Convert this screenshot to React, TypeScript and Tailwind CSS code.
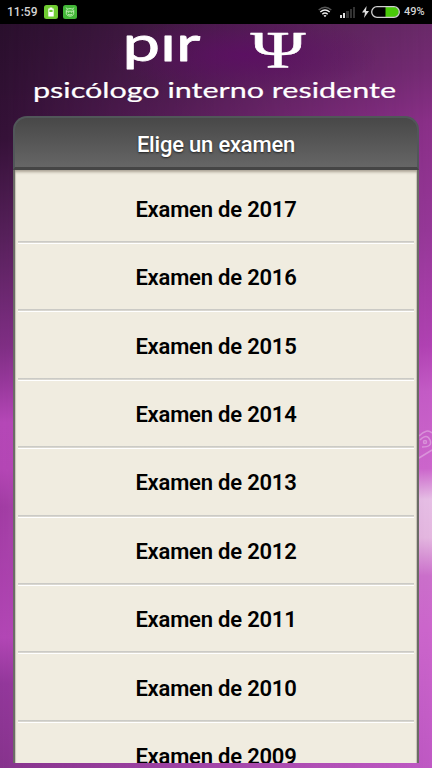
import { clsx } from 'clsx';

const exams = [2017, 2016, 2015, 2014, 2013, 2012, 2011, 2010, 2009];

const signalBars = [3, 5, 7, 9, 11];

const StatusBar = () => (
  <header className="relative flex h-6 items-center bg-black pl-[7px] text-[#d4d4d4]">
    <span className="w-[37px] text-[12px] font-medium leading-6">11:59</span>
    <svg className="h-[14px] w-[14px]" viewBox="0 0 14 14">
      <rect width="14" height="14" rx="2.5" fill="#70cc32" />
      <path d="M4.3 3.6h1.4V2.4h2.6v1.2h1.4v7.9H4.3z" fill="#fff" />
      <path d="M5.4 4.8h3.2v2.2H5.4z" fill="#70cc32" />
    </svg>
    <svg className="ml-[5px] h-[14px] w-[14px]" viewBox="0 0 14 14">
      <rect width="14" height="14" rx="2.5" fill="#43b738" />
      <g fill="none" stroke="#c9f2bd" strokeWidth="0.9">
        <path d="M3.3 5.5C4 3 10 3 10.7 5.5v3C10.2 12 3.8 12 3.3 8.5zM4.3 4.2 3.2 2.6M9.7 4.2l1.1-1.6M3.3 6.2h7.4M4.8 9.2q2.2 1.5 4.4 0" />
        <path d="M4.8 7.2h1.4M7.8 7.2h1.4" />
      </g>
    </svg>
    <div className="ml-auto flex items-center">
      <svg className="h-[12px] w-[14px]" viewBox="0 0 14 12" fill="none">
        <path d="M.7 4Q7-1.5 13.3 4" stroke="#555" strokeWidth="1.5" />
        <path d="M2.3 6q4.7-4 9.4 0M4.3 8.2q2.7-2.3 5.4 0" stroke="#eee" strokeWidth="1.5" />
        <path d="M5.5 9.6Q7 8.3 8.5 9.6L7 11.3z" fill="#eee" />
      </svg>
      <div className="ml-2 flex h-[11px] w-[15px] items-end gap-[1px]">
        {signalBars.map((height, index) => (
          <span
            key={height}
            className={clsx('w-[2.2px]', index < 2 ? 'bg-[#ddd]' : 'bg-[#333]')}
            style={{ height }}
          />
        ))}
      </div>
      <svg className="ml-[7px] h-[12px] w-[7px]" viewBox="0 0 7 12">
        <path d="M4.6 0 0 6.6h3L2 12l5-7H4z" fill="#ddd" />
      </svg>
      <svg className="ml-[2px] h-[12px] w-[29px]" viewBox="0 0 29 12">
        <path d="M14.5 1H23a5 5 0 0 1 0 10h-8.5z" fill="#49c909" />
        <rect x=".7" y=".7" width="27.6" height="10.6" rx="5.3" fill="none" stroke="#d0d0d0" strokeWidth="1.3" />
      </svg>
      <span className="ml-1 w-[28px] text-[11px] font-medium leading-6">49%</span>
    </div>
  </header>
);

const Background = () => (
  <div className="absolute inset-0 bg-[linear-gradient(to_bottom,#6a2a69_3%,#752b74_9%,#8b3089_16%,#963898_30%,#b142b3_45%,#c45cc6_51%,#cc66cc_61%,#e6bfe5_65%,#e4b8e0_70%,#cb70cb_75%,#cc66cc_82%,#bf59c4_100%)]">
    <div className="absolute inset-0 bg-[linear-gradient(to_bottom,#290f2c_3%,#341137_18%,#56205a_31%,#7e2e83_45%,#97389b_50%,#b447b6_55%,#b346b4_61%,#a13ba3_66%,#b146b4_83%,#92379a_89%,#86338c_100%)] [mask-image:linear-gradient(to_right,#000,transparent)]" />
    <div className="absolute left-[110px] top-[15px] h-[80px] w-[270px] bg-[radial-gradient(closest-side,#5d0d65,transparent)] opacity-80" />
    <svg className="absolute right-0 top-[428px] h-[32px] w-[13px] opacity-30" viewBox="0 0 13 32" fill="none" stroke="#fff" strokeWidth="1.5">
      <path d="M0 8Q8 0 13 5M1 12q7-7 10 0t-8 7M0 30l13-8" />
      <circle cx="6" cy="14" r="1.5" />
    </svg>
  </div>
);

const Logo = () => (
  <svg className="relative h-[92px] w-[432px] overflow-visible" fill="#fff" stroke="#fff" strokeLinejoin="round">
    <text
      x="122.5"
      y="37"
      textLength="78"
      lengthAdjust="spacingAndGlyphs"
      strokeWidth="0.8"
      className="font-[Lato,sans-serif] text-[49px]"
    >
      pır
    </text>
    <text
      x="250.5"
      y="44"
      textLength="55"
      lengthAdjust="spacingAndGlyphs"
      strokeWidth="0.5"
      className="font-['Liberation_Serif',serif] text-[53px]"
    >
      Ψ
    </text>
    <text
      x="33"
      y="73.5"
      textLength="363"
      lengthAdjust="spacingAndGlyphs"
      strokeWidth="0.2"
      className="font-[Lato,sans-serif] text-[21px]"
    >
      psicólogo interno residente
    </text>
  </svg>
);

interface ExamRowProps {
  year: number;
}

const ExamRow: React.FC<ExamRowProps> = ({ year }) => (
  <li className="relative mx-[3px] flex h-[68.4px] shrink-0 items-center justify-center border-b border-white text-[22px] font-semibold tracking-[-0.2px] text-black">
    Examen de {year}
    <span className="absolute inset-x-0 bottom-0 h-[2px] bg-linear-to-b from-[#c4c4c0] to-[#e0ddd6]" />
  </li>
);

const App = () => {
  return (
    <div className="relative h-[768px] w-[432px] overflow-hidden font-[Roboto,sans-serif]">
      <Background />
      <StatusBar />
      <Logo />
      <main className="relative mx-[13px] flex h-[647px] flex-col">
        <h1 className="flex h-[54px] shrink-0 items-center justify-center rounded-t-[14px] border-2 border-b-[3px] border-[#515759] border-b-[#454545] bg-linear-to-b from-[#484848] to-[#666] pt-[4px] text-[22px] font-medium tracking-[-0.2px] text-white [text-shadow:0_1px_2px_#222]">
          Elige un examen
        </h1>
        <ul className="flex min-h-0 flex-1 flex-col overflow-hidden border-x-2 border-[#6b6b66] bg-[#f0ece0] pt-[5.6px] shadow-[inset_0_3px_3px_-1px_#aaa295,inset_1px_0_0_#d0ccc0,inset_-1px_0_0_#d0ccc0]">
          {exams.map((year) => (
            <ExamRow key={year} year={year} />
          ))}
        </ul>
      </main>
    </div>
  );
};

export default App;
